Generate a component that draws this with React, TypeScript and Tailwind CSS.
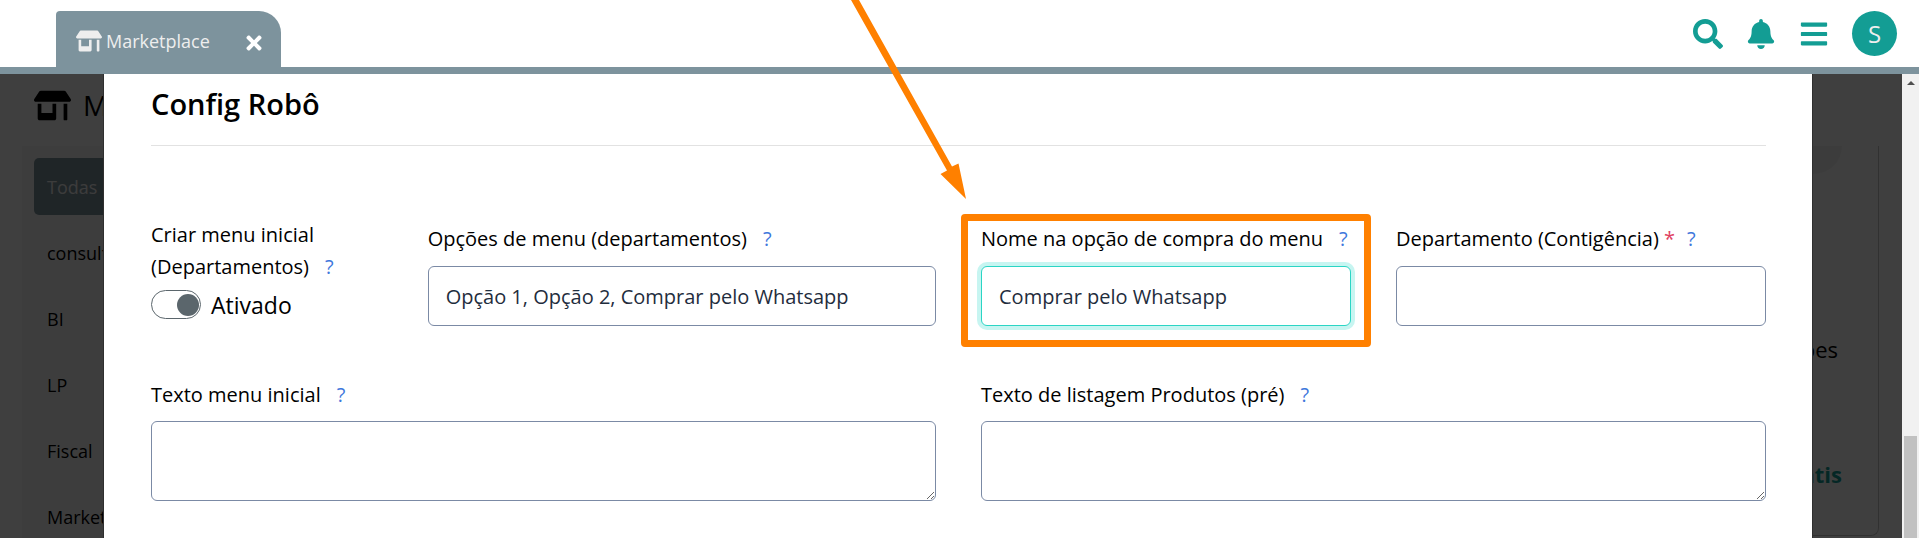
import type { ReactNode } from "react";
import { FaBars, FaBell, FaSearch, FaStoreAlt, FaTimes } from "react-icons/fa";

const categories = ["consultoria", "BI", "LP", "Fiscal", "Marketing"];

const control = "block w-full rounded-[6px] border bg-white text-[#1f2d3d] outline-none";

function Help({ close = false }: { close?: boolean }) {
  return (
    <button type="button" aria-label="Ajuda" className={`${close ? "ml-3" : "ml-4"} text-[#3f78dc]`}>
      ?
    </button>
  );
}

function Field({ id, label, required, className, children }: {
  id: string;
  label: string;
  required?: boolean;
  className: string;
  children: ReactNode;
}) {
  return (
    <div className={className}>
      <div className="flex h-8 items-center whitespace-nowrap">
        <label htmlFor={id}>
          {label}
          {required && <span className="text-[#e0405f]"> *</span>}
        </label>
        <Help close={required} />
      </div>
      {children}
    </div>
  );
}

function Header() {
  return (
    <header className="flex h-[74px] shrink-0 justify-between border-b-[7px] border-[#7d939d] bg-white pr-[22px] pl-14">
      <div className="mt-[11px] flex w-[225px] items-center justify-between rounded-tl-[4px] rounded-tr-[22px] bg-[#7d939d] pr-4 pl-5">
        <a href="#marketplace" className="flex items-center gap-1 pt-1 text-lg text-[#eeeeee]">
          <FaStoreAlt className="size-[26px]" />
          Marketplace
        </a>
        <button type="button" aria-label="Fechar aba" className="pt-2 text-white">
          <FaTimes className="size-[22px]" />
        </button>
      </div>
      <div className="flex items-center gap-[23px] text-[#139d94]">
        <button type="button" aria-label="Pesquisar">
          <FaSearch className="size-[30px]" />
        </button>
        <button type="button" aria-label="Notificações">
          <FaBell className="size-[30px]" />
        </button>
        <button type="button" aria-label="Menu">
          <FaBars className="size-[30px]" />
        </button>
        <button type="button" aria-label="Conta" className="size-[45px] rounded-full bg-[#139d94] text-2xl text-[#eeeeee]">
          S
        </button>
      </div>
    </header>
  );
}

function Backdrop() {
  return (
    <div aria-hidden="true" className="relative col-start-1 row-start-1 flex flex-col overflow-hidden bg-[#fcfcfc] pr-[23px] pl-[22px] text-black">
      <div className="flex h-[72px] items-center gap-3 pb-[10px] pl-3 text-[28px]">
        <FaStoreAlt className="size-[37px]" />
        M
      </div>
      <div className="flex h-[390px]">
        <nav className="-mb-12 flex w-[300px] flex-col gap-[9px] bg-[#f4f4f4] px-3 pt-3 text-lg">
          <span className="flex h-[57px] shrink-0 items-center rounded-[5px] bg-[#7d939d] pl-[13px] text-[#eeeeee]">
            Todas
          </span>
          {categories.map((name) => (
            <span key={name} className="flex h-[57px] shrink-0 items-center pl-[13px]">
              {name}
            </span>
          ))}
        </nav>
        <div className="flex flex-1 flex-col items-end rounded-br-[8px] border-r border-b border-[#c4c4c4]">
          <div className="mr-9 h-7 w-24 rounded-br-[28px] bg-[#f0f0f0]" />
          <p className="mt-[159px] mr-10 text-[22px] leading-8">Informações</p>
          <p className="mt-[93px] mr-9 text-[22px] leading-8 font-bold text-[#139d94]">Grátis</p>
        </div>
      </div>
      <div className="absolute inset-0 bg-black/75" />
    </div>
  );
}

function ConfigDialog() {
  return (
    <section
      role="dialog"
      aria-labelledby="config-title"
      className="relative z-10 col-start-1 row-start-1 mr-[89px] ml-[103px] border-x border-[#2f2f2f] bg-white pr-[46px] pl-[47px] pb-9 text-[20px] text-black"
    >
      <h2 id="config-title" className="border-b border-[#e2e2e2] pt-3 pb-[23px] text-[29px] leading-9 font-semibold">
        Config Robô
      </h2>
      <form className="mt-[73px] grid grid-cols-12 gap-x-[45px]">
        <div className="col-span-2">
          <div className="leading-8">
            <label htmlFor="create-menu">
              Criar menu inicial
              <br />
              (Departamentos)
            </label>
            <Help />
          </div>
          <div className="mt-1 flex items-center gap-[10px] text-[23px] leading-8">
            <input
              id="create-menu"
              type="checkbox"
              role="switch"
              defaultChecked
              className="h-[29px] w-[50px] appearance-none rounded-full border border-[#5b666c] bg-white p-[3px] before:block before:size-[22px] before:rounded-full before:bg-[#5b666c] checked:before:ml-[22px]"
            />
            <label htmlFor="create-menu" className="pt-[2px]">
              Ativado
            </label>
          </div>
        </div>
        <Field id="menu-options" label="Opções de menu (departamentos)" className="col-span-4 pt-1">
          <input
            id="menu-options"
            type="text"
            defaultValue="Opção 1, Opção 2, Comprar pelo Whatsapp"
            className={`${control} mt-[11px] h-[60px] border-[#7b8aa5] px-[17px]`}
          />
        </Field>
        <div className="relative col-span-3 pt-1">
          <div className="pointer-events-none absolute -inset-x-5 -top-[5px] h-[133px] rounded-[4px] border-[7px] border-[#ff8000]" />
          <Field id="buy-option" label="Nome na opção de compra do menu" className="relative">
            <input
              id="buy-option"
              type="text"
              defaultValue="Comprar pelo Whatsapp"
              className={`${control} mt-[11px] h-[60px] border-[#2bd5c5] px-[17px] ring-4 ring-[#c7f5f1]`}
            />
          </Field>
        </div>
        <Field id="department" label="Departamento (Contigência)" required className="col-span-3 pt-1">
          <input id="department" type="text" className={`${control} mt-[11px] h-[60px] border-[#7b8aa5] px-[17px]`} />
        </Field>
        <Field id="menu-text" label="Texto menu inicial" className="col-span-6 mt-[53px]">
          <textarea id="menu-text" className={`${control} mt-[10px] h-20 resize border-[#7b8aa5] px-[17px] py-3`} />
        </Field>
        <Field id="product-text" label="Texto de listagem Produtos (pré)" className="col-span-6 mt-[53px]">
          <textarea id="product-text" className={`${control} mt-[10px] h-20 resize border-[#7b8aa5] px-[17px] py-3`} />
        </Field>
      </form>
    </section>
  );
}

function ScrollBar() {
  return (
    <div aria-hidden="true" className="flex w-[17px] shrink-0 flex-col items-center justify-between bg-[#f1f1f1]">
      <svg viewBox="0 0 8 4" className="mt-[7px] h-1 w-2">
        <path d="M0 4 4 0l4 4z" fill="#505050" />
      </svg>
      <div className="h-[102px] w-[13px] bg-[#c1c1c1]" />
    </div>
  );
}

export default function App() {
  return (
    <div className="relative flex min-h-screen flex-col overflow-hidden font-['Open_Sans','Noto_Sans',sans-serif]">
      <Header />
      <main className="flex flex-1">
        <div className="grid min-w-0 flex-1">
          <Backdrop />
          <ConfigDialog />
        </div>
        <ScrollBar />
      </main>
      <svg viewBox="0 0 120 200" className="pointer-events-none absolute top-0 left-[850px] z-20 h-[200px] w-[120px]">
        <path d="M1 0h8l93 166.500 6.500-3L116 199 90.500 174l6.500-3.500z" fill="#ff8000" />
      </svg>
    </div>
  );
}
